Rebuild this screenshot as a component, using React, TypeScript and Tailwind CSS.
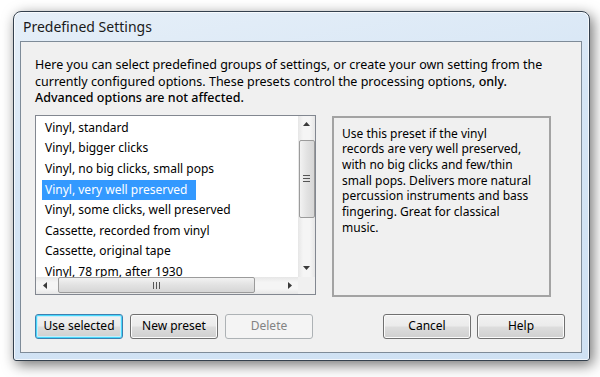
import React from 'react'

const presets = [
  'Vinyl, standard',
  'Vinyl, bigger clicks',
  'Vinyl, no big clicks, small pops',
  'Vinyl, very well preserved',
  'Vinyl, some clicks, well preserved',
  'Cassette, recorded from vinyl',
  'Cassette, original tape',
  'Vinyl, 78 rpm, after 1930',
]

const description = [
  'Use this preset if the vinyl',
  'records are very well preserved,',
  'with no big clicks and few/thin',
  'small pops. Delivers more natural',
  'percussion instruments and bass',
  'fingering. Great for classical',
  'music.',
]

function Arrow({ dir }: { dir: 'up' | 'down' | 'left' | 'right' }) {
  const pts = {
    up: '0,4 3.5,0 7,4',
    down: '0,0 3.5,4 7,0',
    left: '4,0 0,3.5 4,7',
    right: '0,0 4,3.5 0,7',
  }[dir]
  const w = dir === 'up' || dir === 'down' ? 7 : 4
  const h = dir === 'up' || dir === 'down' ? 4 : 7
  return (
    <svg width={w} height={h} viewBox={`0 0 ${w} ${h}`}>
      <polygon points={pts} fill="#3a3a3a" />
    </svg>
  )
}

function Button({
  children,
  variant = 'normal',
}: {
  children: React.ReactNode
  variant?: 'normal' | 'default' | 'disabled'
}) {
  const styles = {
    normal:
      'border-[#707070] bg-[linear-gradient(#f2f2f2_0%,#ebebeb_48%,#dddddd_52%,#cfcfcf_100%)] text-black shadow-[inset_0_0_0_1px_#fbfbfb]',
    default:
      'border-[#3c7fb1] bg-[linear-gradient(#f2f2f2_0%,#ebebeb_48%,#dddddd_52%,#cfcfcf_100%)] text-black shadow-[inset_0_0_0_1px_#48d8fb,inset_0_0_0_2px_#c6edfb]',
    disabled: 'border-[#adb2b5] bg-[#f4f4f4] text-[#838383]',
  }[variant]
  return (
    <div
      className={`flex h-[25px] w-[88px] items-center justify-center rounded-[3px] border text-[12px] ${styles}`}
    >
      {children}
    </div>
  )
}

export default function App() {
  return (
    <div className="h-[377px] w-[600px] overflow-hidden bg-white pl-[13px] pt-[11px] font-['Noto_Sans',sans-serif] text-[12px] text-black">
      <div className="flex h-[350px] w-[577px] flex-col rounded-t-[8px] rounded-b-[3px] border border-[#34404d] bg-[linear-gradient(170deg,#e6eff8_0%,#d5e5f5_40%,#cfe1f3_100%)] shadow-[3px_4px_14px_rgba(0,0,0,0.55),inset_0_0_0_1px_rgba(255,255,255,0.7)]">
        <div className="flex h-[29px] items-center pl-[9px] text-[14px] text-[#1a1a1a]">
          Predefined Settings
        </div>

        <div className="mb-[7px] ml-[6px] mr-[7px] flex flex-1 flex-col border border-[#7e8b98] bg-[#f0f0f0] px-[14px] pt-[15px]">
          <div className="whitespace-nowrap text-[12.5px] leading-[16.5px]">
            <div>Here you can select predefined groups of settings, or create your own setting from the</div>
            <div>
              currently configured options. These presets control the processing options,{' '}
              <span className="font-medium">only.</span>
            </div>
            <div className="font-medium">Advanced options are not affected.</div>
          </div>

          <div className="mt-[8px] flex gap-[16px]">
            {/* preset list */}
            <div className="flex h-[180px] w-[281px] flex-col border border-[#828790] bg-white">
              <div className="flex flex-1 overflow-hidden">
                <div className="flex-1 overflow-hidden pl-[6px] pt-[2px]">
                  {presets.map((p, i) => (
                    <div key={p} className="flex h-[20.6px] items-center">
                      <span
                        className={`whitespace-nowrap px-[3px] leading-[20px] ${
                          i === 3 ? 'bg-[#3399ff] pr-[9px] text-white' : ''
                        }`}
                      >
                        {p}
                      </span>
                    </div>
                  ))}
                </div>
                <div className="flex w-[17px] flex-col items-center bg-[#f3f3f3] bg-[linear-gradient(90deg,#e6e6e6,#f5f5f5_30%,#f5f5f5_70%,#e6e6e6)]">
                  <div className="flex h-[17px] items-center justify-center">
                    <Arrow dir="up" />
                  </div>
                  <div className="mt-[7px] flex h-[78px] w-[16px] flex-col items-center justify-center gap-[2px] rounded-[2px] border border-[#9b9b9b] bg-[linear-gradient(90deg,#f2f2f2,#e2e2e2_50%,#d6d6d6)]">
                    <div className="h-px w-[7px] bg-[#555]" />
                    <div className="h-px w-[7px] bg-[#555]" />
                    <div className="h-px w-[7px] bg-[#555]" />
                  </div>
                  <div className="flex-1" />
                  <div className="flex h-[17px] items-center justify-center">
                    <Arrow dir="down" />
                  </div>
                </div>
              </div>
              <div className="flex h-[17px]">
                <div className="flex flex-1 items-center bg-[linear-gradient(#e6e6e6,#f5f5f5_30%,#f5f5f5_70%,#e6e6e6)]">
                  <div className="flex w-[17px] justify-center">
                    <Arrow dir="left" />
                  </div>
                  <div className="ml-[5px] flex h-[16px] w-[197px] items-center justify-center gap-[2px] rounded-[2px] border border-[#9b9b9b] bg-[linear-gradient(#f2f2f2,#e2e2e2_50%,#d6d6d6)]">
                    <div className="h-[7px] w-px bg-[#555]" />
                    <div className="h-[7px] w-px bg-[#555]" />
                    <div className="h-[7px] w-px bg-[#555]" />
                  </div>
                  <div className="flex-1" />
                  <div className="flex w-[17px] justify-center">
                    <Arrow dir="right" />
                  </div>
                </div>
                <div className="w-[17px] bg-[#f0f0f0]" />
              </div>
            </div>

            {/* description */}
            <div className="mt-[1px] h-[181px] w-[219px] border-2 border-[#a3a3a3] pl-[8px] pt-[8px] leading-[15.7px]">
              {description.map((l) => (
                <div key={l} className="whitespace-nowrap">
                  {l}
                </div>
              ))}
            </div>
          </div>

          <div className="mt-[17px] flex items-center">
            <div className="flex gap-[7px]">
              <Button variant="default">Use selected</Button>
              <Button>New preset</Button>
              <Button variant="disabled">Delete</Button>
            </div>
            <div className="ml-[70px] flex gap-[6px]">
              <Button>Cancel</Button>
              <Button>Help</Button>
            </div>
          </div>
        </div>
      </div>
    </div>
  )
}
